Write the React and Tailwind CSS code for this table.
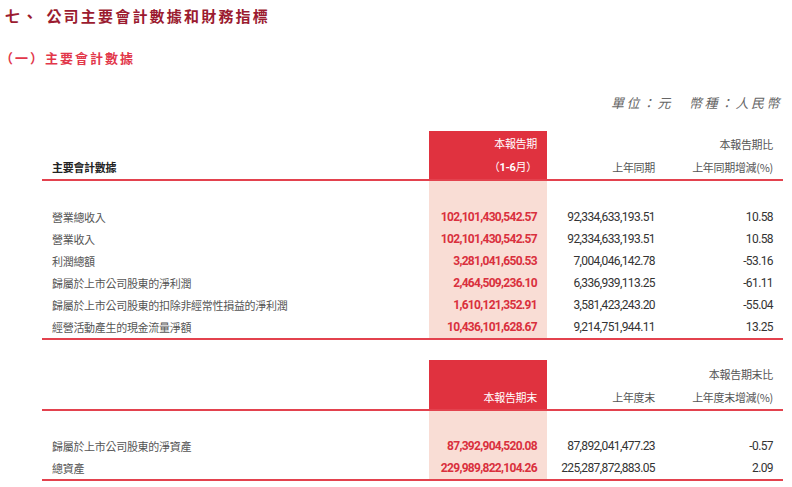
const rows1 = [
  ["營業總收入", "102,101,430,542.57", "92,334,633,193.51", "10.58"],
  ["營業收入", "102,101,430,542.57", "92,334,633,193.51", "10.58"],
  ["利潤總額", "3,281,041,650.53", "7,004,046,142.78", "-53.16"],
  ["歸屬於上市公司股東的淨利潤", "2,464,509,236.10", "6,336,939,113.25", "-61.11"],
  ["歸屬於上市公司股東的扣除非經常性損益的淨利潤", "1,610,121,352.91", "3,581,423,243.20", "-55.04"],
  ["經營活動產生的現金流量淨額", "10,436,101,628.67", "9,214,751,944.11", "13.25"],
];

const rows2 = [
  ["歸屬於上市公司股東的淨資產", "87,392,904,520.08", "87,892,041,477.23", "-0.57"],
  ["總資產", "229,989,822,104.26", "225,287,872,883.05", "2.09"],
];

const GRID = "grid grid-cols-[387px_118px_118px_118px]";

function Header({ label, c1, c2, c3 }) {
  return (
    <div className={GRID + " h-[48px]"}>
      <div className="flex items-end pl-[10px] text-[11px] leading-[23px] font-bold text-[#222] tracking-[-0.3px]">
        {label}
      </div>
      <div className="bg-[#e0323f] flex flex-col justify-end items-end pr-[10px] text-[11px] leading-[23px] text-white tracking-[-0.3px]">
        {c1}
      </div>
      <div className="flex flex-col justify-end items-end pr-[10px] text-[11px] leading-[23px] text-[#555] tracking-[-0.3px]">
        {c2}
      </div>
      <div className="flex flex-col justify-end items-end pr-[10px] text-[11px] leading-[23px] text-[#555] tracking-[-0.3px]">
        {c3}
      </div>
    </div>
  );
}

function Body({ rows, pad }) {
  return (
    <div>
      <div className={GRID} style={{ height: pad }}>
        <div />
        <div className="bg-[#f9ddd5]" />
        <div />
        <div />
      </div>
      {rows.map((r, i) => (
        <div key={i} className={GRID + " h-[22px] items-center"}>
          <div className="pl-[10px] text-[11px] text-[#555] tracking-[-0.3px] leading-[22px]">{r[0]}</div>
          <div className="bg-[#f9ddd5] h-full flex items-center justify-end pr-[10px] font-['Roboto',sans-serif] font-bold text-[12px] tracking-[-0.7px] text-[#d9303d]">
            {r[1]}
          </div>
          <div className="flex items-center justify-end pr-[10px] font-['Roboto',sans-serif] text-[12px] tracking-[-0.6px] text-[#333]">
            {r[2]}
          </div>
          <div className="flex items-center justify-end pr-[10px] font-['Roboto',sans-serif] text-[12px] tracking-[-0.6px] text-[#333]">
            {r[3]}
          </div>
        </div>
      ))}
    </div>
  );
}

function Line() {
  return <div className="h-[2px] bg-[#e3424e]" />;
}

export default function App() {
  return (
    <div className="w-[792px] h-[487px] bg-white overflow-hidden font-['Noto_Sans_CJK_TC','Noto_Sans_CJK_SC',sans-serif]">
      <div className="pt-[6px] pl-[5px] text-[15px] leading-[20px] font-bold text-[#9b1b30] tracking-[2.2px] flex">
        <span>七、</span>
        <span className="ml-[7px]">公司主要會計數據和財務指標</span>
      </div>
      <div className="mt-[23px] pl-0 text-[13px] leading-[18px] font-bold text-[#e2374a] tracking-[2px]">
        （一）主要會計數據
      </div>
      <div className="mt-[27px] pr-[10px] flex justify-end text-[13px] leading-[18px] text-[#666] italic tracking-[2.5px]">
        <span>單位：元</span>
        <span className="ml-[16px]">幣種：人民幣</span>
      </div>
      <div className="mt-[19px] ml-[42px] w-[741px]">
        <Header
          label="主要會計數據"
          c1={
            <>
              <span>本報告期</span>
              <span>
                （<span className="font-bold font-['Roboto',sans-serif]">1-6</span>月）
              </span>
            </>
          }
          c2={<span>上年同期</span>}
          c3={
            <>
              <span>本報告期比</span>
              <span>上年同期增減(%)</span>
            </>
          }
        />
        <Line />
        <Body rows={rows1} pad="25px" />
        <Line />
      </div>
      <div className="mt-[20px] ml-[42px] w-[741px]">
        <div className={GRID + " h-[49px]"}>
          <div />
          <div className="bg-[#e0323f] flex flex-col justify-end items-end pr-[10px] text-[11px] leading-[23px] text-white tracking-[-0.3px]">
            <span>本報告期末</span>
          </div>
          <div className="flex flex-col justify-end items-end pr-[10px] text-[11px] leading-[23px] text-[#555] tracking-[-0.3px]">
            <span>上年度末</span>
          </div>
          <div className="flex flex-col justify-end items-end pr-[10px] text-[11px] leading-[23px] text-[#555] tracking-[-0.3px]">
            <span>本報告期末比</span>
            <span>上年度末增減(%)</span>
          </div>
        </div>
        <Line />
        <Body rows={rows2} pad="24px" />
        <Line />
      </div>
    </div>
  );
}
